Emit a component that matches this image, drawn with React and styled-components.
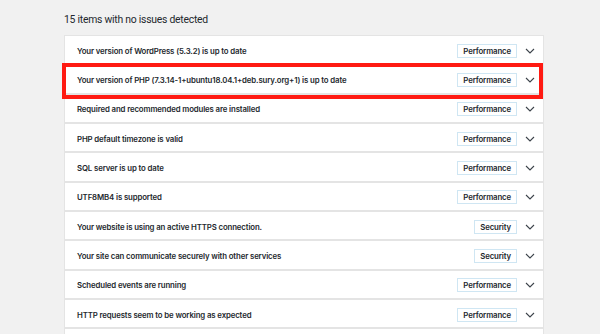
import styled, { createGlobalStyle } from 'styled-components'

const Colors = {
  page: '#f1f1f1',
  panel: '#ffffff',
  line: '#e4e4e4',
  text: '#23282d',
  badgeLine: '#cfe6f3',
  red: '#ff1a12',
}

const items = [
  { text: 'Your version of WordPress (5.3.2) is up to date', badge: 'Performance' },
  { text: 'Your version of PHP (7.3.14-1+ubuntu18.04.1+deb.sury.org+1) is up to date', badge: 'Performance', marked: true },
  { text: 'Required and recommended modules are installed', badge: 'Performance' },
  { text: 'PHP default timezone is valid', badge: 'Performance' },
  { text: 'SQL server is up to date', badge: 'Performance' },
  { text: 'UTF8MB4 is supported', badge: 'Performance' },
  { text: 'Your website is using an active HTTPS connection.', badge: 'Security' },
  { text: 'Your site can communicate securely with other services', badge: 'Security' },
  { text: 'Scheduled events are running', badge: 'Performance' },
  { text: 'HTTP requests seem to be working as expected', badge: 'Performance' },
]

const GlobalStyle = createGlobalStyle`
  html, body {
    margin: 0;
    padding: 0;
    background: ${Colors.page};
    font-family: Roboto, "Liberation Sans", Arial, sans-serif;
    color: ${Colors.text};
    overflow: hidden;
  }
`

const Page = styled.main`
  width: 600px;
  height: 334px;
  box-sizing: border-box;
  padding: 14px 56px 0 64px;
  overflow: hidden;
`

const Heading = styled.h2`
  margin: 0 0 9px 0;
  font-size: 10.4px;
  font-weight: 400;
  line-height: 12px;
  letter-spacing: -0.25px;
`

const List = styled.ul`
  list-style: none;
  margin: 0;
  padding: 0;
  background: ${Colors.panel};
  border: 1px solid ${Colors.line};
`

const Row = styled.li`
  position: relative;
  display: flex;
  align-items: center;
  box-sizing: border-box;
  height: 29.33px;
  padding: 2px 8px 0 12px;
  border-bottom: 2px solid ${Colors.line};
  font-family: Inter, Roboto, sans-serif;
`

const Marker = styled.span`
  position: absolute;
  left: -3px;
  right: 0;
  top: -2px;
  bottom: -6px;
  border: 4px solid ${Colors.red};
  pointer-events: none;
`

const Label = styled.span`
  flex: 1;
  font-size: 7.8px;
  font-weight: 600;
  letter-spacing: -0.12px;
  white-space: nowrap;
`

const Badge = styled.span`
  display: inline-flex;
  align-items: center;
  box-sizing: border-box;
  height: 14px;
  padding: 0 5px;
  border: 1px solid ${Colors.badgeLine};
  font-size: 7.8px;
  font-weight: 600;
  letter-spacing: -0.12px;
  margin-right: 8px;
`

const Chevron = () => (
  <svg width="10" height="6" viewBox="0 0 10 6" fill="none">
    <path d="M1 1l4 4 4-4" stroke="#3c434a" strokeWidth="1.1" />
  </svg>
)

const App = () => {
  return (
    <>
      <GlobalStyle />
      <Page>
        <Heading>15 items with no issues detected</Heading>
        <List>
          {items.map((item) => (
            <Row key={item.text}>
              {item.marked && <Marker />}
              <Label>{item.text}</Label>
              <Badge>{item.badge}</Badge>
              <Chevron />
            </Row>
          ))}
          <Row />
        </List>
      </Page>
    </>
  )
}

export default App
